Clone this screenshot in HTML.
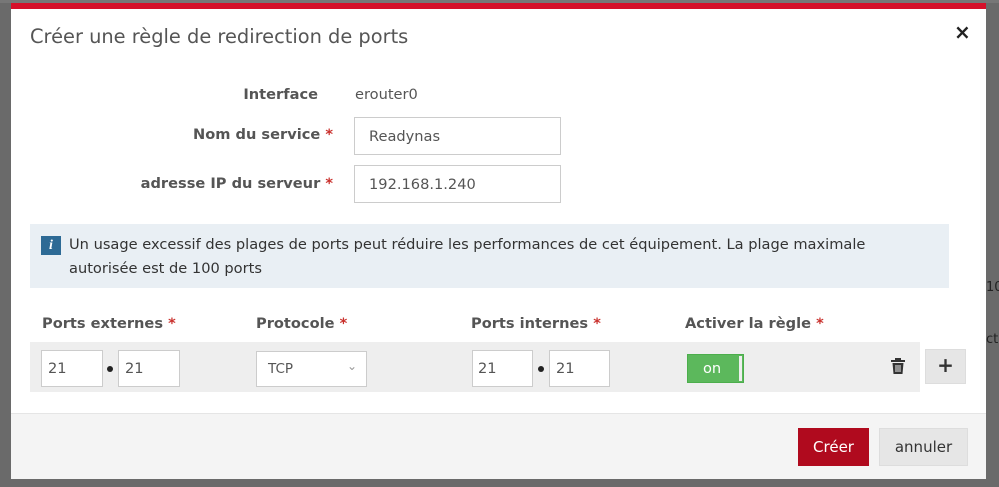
<!DOCTYPE html>
<html><head><meta charset="utf-8"><style>
*{box-sizing:border-box;margin:0;padding:0}
body{width:999px;height:487px;background:#6a6a6a;font-family:"DejaVu Sans","Liberation Sans",sans-serif;position:relative;overflow:hidden;color:#555}
.abs{position:absolute}
.modal{left:11px;top:3px;width:975px;height:476px;background:#fff;border-top:6px solid #d5102a}
.lbl{font-weight:bold;font-size:14.6px;color:#555;text-align:right;width:320px;left:0}
.star{color:#c9302c}
.inp{border:1px solid #ccc;background:#fff;font-size:14.6px;color:#555;padding-left:14px;display:flex;align-items:center}
.hdr{font-weight:bold;font-size:14.6px;color:#555}
.dot{width:6px;height:6px;border-radius:50%;background:#222}
</style></head><body>
<div class="abs" style="left:0;top:0;width:999px;height:3px;background:#777"></div>
<div class="abs" style="left:986px;top:280px;font-size:13px;color:#222">10</div>
<div class="abs" style="left:986px;top:332px;font-size:13px;color:#222">ct</div>
<div class="abs modal"></div>
<div class="abs" style="left:30px;top:25px;font-size:19.4px;color:#555">Créer une règle de redirection de ports</div>
<div class="abs" style="left:954px;top:20px;font-size:20px;font-weight:bold;color:#222">×</div>
<div class="abs lbl" style="top:86px;width:318px">Interface</div>
<div class="abs" style="left:355px;top:86px;font-size:14.6px">erouter0</div>
<div class="abs lbl" style="top:126px;width:333px">Nom du service <span class="star">*</span></div>
<div class="abs inp" style="left:354px;top:117px;width:207px;height:38px">Readynas</div>
<div class="abs lbl" style="top:175px;width:333px">adresse IP du serveur <span class="star">*</span></div>
<div class="abs inp" style="left:354px;top:165px;width:207px;height:38px">192.168.1.240</div>
<div class="abs" style="left:30px;top:224px;width:919px;height:64px;background:#e9eff4"></div>
<div class="abs" style="left:41px;top:236px;width:20px;height:19px;background:#2d6a95;color:#fff;font-style:italic;font-weight:bold;font-size:14px;text-align:center;line-height:19px;font-family:'Liberation Serif',serif">i</div>
<div class="abs" style="left:69px;top:233px;width:840px;font-size:14.6px;line-height:24px;color:#333">Un usage excessif des plages de ports peut réduire les performances de cet équipement. La plage maximale autorisée est de 100 ports</div>
<div class="abs hdr" style="left:42px;top:315px">Ports externes <span class="star">*</span></div>
<div class="abs hdr" style="left:256px;top:315px">Protocole <span class="star">*</span></div>
<div class="abs hdr" style="left:471px;top:315px">Ports internes <span class="star">*</span></div>
<div class="abs hdr" style="left:685px;top:315px">Activer la règle <span class="star">*</span></div>
<div class="abs" style="left:30px;top:342px;width:890px;height:50px;background:#eee"></div>
<div class="abs inp" style="left:41px;top:350px;width:62px;height:37px;padding-left:6px">21</div>
<div class="abs dot" style="left:107px;top:366px"></div>
<div class="abs inp" style="left:118px;top:350px;width:62px;height:37px;padding-left:6px">21</div>
<div class="abs inp" style="left:256px;top:351px;width:111px;height:36px;padding-left:11px;font-size:13.5px">TCP<span style="position:absolute;right:9px;top:7px;font-size:12px;color:#999">⌄</span></div>
<div class="abs inp" style="left:472px;top:350px;width:61px;height:37px;padding-left:5px">21</div>
<div class="abs dot" style="left:538px;top:366px"></div>
<div class="abs inp" style="left:549px;top:350px;width:61px;height:37px;padding-left:6px">21</div>
<div class="abs" style="left:687px;top:354px;width:57px;height:29px;background:#5cb85c;border:1px solid #4cae4c;color:#fff;font-size:14.6px;line-height:27px;padding-left:15px">on<div class="abs" style="right:1px;top:1px;width:3px;height:25px;background:#eee"></div></div>
<svg class="abs" style="left:891px;top:358px" width="14" height="16" viewBox="0 0 14 16"><rect x="0" y="2" width="14" height="2" fill="#333"/><rect x="4" y="0" width="6" height="3" fill="#333"/><path d="M1.5 5h11l-1 11h-9z" fill="#333"/><path d="M5 7v7M7 7v7M9 7v7" stroke="#eee" stroke-width="1"/></svg>
<div class="abs" style="left:925px;top:349px;width:41px;height:35px;background:#e6e6e6;border:1px solid #ddd;font-size:20px;font-weight:bold;color:#333;text-align:center;line-height:31px">+</div>
<div class="abs" style="left:11px;top:413px;width:975px;height:66px;background:#f4f4f4;border-top:1px solid #e5e5e5"></div>
<div class="abs" style="left:798px;top:428px;width:71px;height:38px;background:#b00a1e;color:#fff;font-size:15px;text-align:center;line-height:38px">Créer</div>
<div class="abs" style="left:879px;top:428px;width:89px;height:38px;background:#e6e6e6;border:1px solid #ddd;color:#333;font-size:15px;text-align:center;line-height:36px">annuler</div>
</body></html>
